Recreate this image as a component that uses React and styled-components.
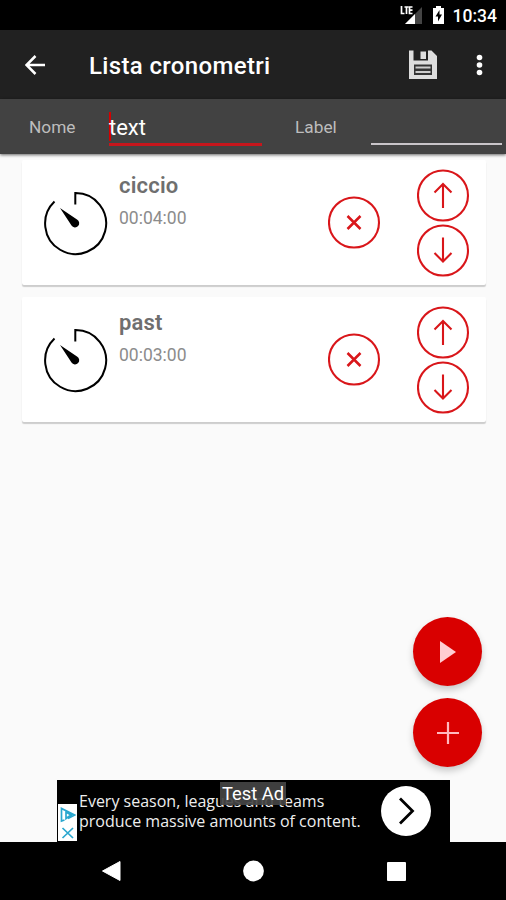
import styled, { createGlobalStyle } from "styled-components";

const GlobalStyle = createGlobalStyle`
  * {
    box-sizing: border-box;
  }

  body {
    margin: 0;
    background: #fafafa;
    font-family: Roboto, "Liberation Sans", sans-serif;
  }

  button {
    padding: 0;
    border: none;
    background: none;
    font: inherit;
  }

  svg {
    display: block;
  }
`;

const Screen = styled.div`
  display: flex;
  flex-direction: column;
  width: 506px;
  height: 900px;
  overflow: hidden;
  background: #fafafa;
`;

const StatusBar = styled.div`
  display: flex;
  flex: none;
  justify-content: flex-end;
  height: 30px;
  padding-right: 9px;
  background: #000;
  color: #fff;
`;

const Clock = styled.span`
  margin-left: 5px;
  font-size: 17.5px;
  font-weight: 500;
  line-height: 32px;
`;

const Toolbar = styled.header`
  display: flex;
  flex: none;
  align-items: center;
  height: 69px;
  padding: 0 20px 0 25px;
  background: #212121;
`;

const Title = styled.h1`
  flex: 1;
  margin: 2px 0 0 43px;
  color: #fff;
  font-size: 24px;
  font-weight: 500;
  letter-spacing: 0.35px;
  line-height: 30px;
`;

const MenuButton = styled.button`
  margin-left: 36px;
`;

const Form = styled.div`
  display: flex;
  flex: none;
  height: 55px;
  padding-left: 29px;
  background: #424242;
  box-shadow: 0 1px 3px rgba(0, 0, 0, 0.6);
  z-index: 1;
`;

const Label = styled.label`
  width: ${(props) => props.$width};
  color: #bdbdbd;
  font-size: 17.3px;
  line-height: 57px;
`;

const Field = styled.div`
  display: flex;
  width: ${(props) => props.$width};
  height: ${(props) => (props.$active ? "47px" : "46px")};
  margin-right: 33px;
  padding-top: 13px;
  border-bottom: ${(props) =>
    props.$active ? "3px solid #c6161c" : "2px solid #c9c5c9"};
  color: #fff;
  font-size: 22px;
  line-height: 32px;

  &:last-child {
    margin-right: 0;
  }
`;

const Caret = styled.span`
  width: 2px;
  height: 29px;
  margin-right: -2px;
  background: #d50000;
`;

const List = styled.main`
  display: flex;
  flex: 1;
  flex-direction: column;
  gap: 12px;
  padding: 6px 20px 0 22px;
`;

const Card = styled.article`
  display: flex;
  height: 125px;
  padding: 9px 16px 0 21px;
  border-radius: 2px;
  background: #fff;
  box-shadow: 0 2px 1px #cdcdcd;
`;

const Details = styled.div`
  flex: 1;
  margin: 4px 0 0 11px;
`;

const Name = styled.h2`
  margin: 0;
  color: #6f6f6f;
  font-size: 22px;
  font-weight: 600;
  letter-spacing: 0.2px;
  line-height: 26px;
`;

const Time = styled.div`
  margin-top: 8px;
  color: #8c8c8c;
  font-size: 17.5px;
  font-weight: 400;
  line-height: 22px;
`;

const TimerSlot = styled.div`
  padding-top: 20px;
`;

const DeleteButton = styled.button`
  align-self: flex-start;
  margin: 27px 36px 0 0;
`;

const Movers = styled.div`
  display: flex;
  flex-direction: column;
  gap: 2px;
`;

const Actions = styled.div`
  display: flex;
  flex: none;
  flex-direction: column;
  align-items: flex-end;
  gap: 12px;
  height: 163px;
  padding-right: 24px;
`;

const Fab = styled.button`
  display: grid;
  place-items: center;
  width: 69px;
  height: 69px;
  border-radius: 50%;
  background: #d90000;
  box-shadow: 0 4px 7px rgba(0, 0, 0, 0.2);
`;

const Ad = styled.aside`
  display: flex;
  position: relative;
  flex: none;
  width: 393px;
  height: 62px;
  margin-left: 57px;
  background: #000;
`;

const AdChoices = styled.div`
  display: grid;
  align-self: flex-end;
  place-items: center;
  width: 19px;
  height: 37px;
  margin: 0 0 1px 1px;
  background: #fff;
`;

const AdText = styled.p`
  width: 302px;
  margin: 12px 0 0 2px;
  color: #eee;
  font-family: "Open Sans", sans-serif;
  font-size: 16px;
  line-height: 19.5px;
  white-space: nowrap;
`;

const AdLine = styled.span`
  display: block;
`;

const AdButton = styled.button`
  display: grid;
  place-items: center;
  width: 50px;
  height: 50px;
  margin-top: 6px;
  border-radius: 50%;
  background: #fff;
`;

const TestBadge = styled.div`
  position: absolute;
  top: 2px;
  left: 163px;
  width: 66px;
  height: 23px;
  background: rgba(68, 68, 68, 0.92);
  color: #fff;
  font-size: 18.3px;
  line-height: 24px;
  text-align: center;
  white-space: nowrap;
`;

const NavBar = styled.nav`
  display: flex;
  flex: none;
  align-items: center;
  justify-content: space-between;
  height: 58px;
  padding: 0 99px 0 101px;
  background: #000;
`;

const timers = [
  { name: "ciccio", time: "00:04:00" },
  { name: "past", time: "00:03:00" },
];

const glyphs = {
  close: "M19.5 20l13 13M32.5 20l-13 13",
  up: "M26 39V15M17.5 23.5l8.5-8.5 8.5 8.5",
  down: "M26 13.5v24M17.5 29l8.5 8.5 8.5-8.5",
};

function RoundIcon({ type }) {
  return (
    <svg width="53" height="53" viewBox="0 0 53 53" fill="none" stroke="#d9161a">
      <circle cx="26" cy="26.5" r="25" strokeWidth="2.1" />
      <path d={glyphs[type]} strokeWidth={type === "close" ? 2.5 : 2.1} />
    </svg>
  );
}

function TimerIcon() {
  return (
    <svg width="65" height="68" viewBox="0 0 65 68">
      <path
        d="M32.3 15.5V4A30.5 30.5 0 1 1 11.5 12.5"
        fill="none"
        stroke="#000"
        strokeWidth="2"
      />
      <path d="M17 19L34 30.5a4.2 4.2 0 1 1-5.500 6z" />
    </svg>
  );
}

function TimerCard({ timer }) {
  return (
    <Card>
      <TimerSlot>
        <TimerIcon />
      </TimerSlot>
      <Details>
        <Name>{timer.name}</Name>
        <Time>{timer.time}</Time>
      </Details>
      <DeleteButton>
        <RoundIcon type="close" />
      </DeleteButton>
      <Movers>
        <button>
          <RoundIcon type="up" />
        </button>
        <button>
          <RoundIcon type="down" />
        </button>
      </Movers>
    </Card>
  );
}

function StatusIcons() {
  return (
    <svg width="48" height="30" viewBox="0 0 48 30">
      <path d="M22 7v17H5z" fill="#444" />
      <path d="M15 14v10H5z" fill="#fff" />
      <path
        d="M1.5 6v7.500h3M4.500 7h4M6.500 7v7M12.500 7h-3v6.500h3M9.500 10.200h3"
        fill="none"
        stroke="#fff"
        strokeWidth="1.7"
      />
      <path d="M36 6h5v2h3v16H33V8h3z" fill="#fff" />
      <path d="M39.5 10l-4 6.500h2.500v5l4-7h-2.500z" fill="#000" />
    </svg>
  );
}

export default function App() {
  return (
    <>
      <GlobalStyle />
      <Screen>
        <StatusBar>
          <StatusIcons />
          <Clock>10:34</Clock>
        </StatusBar>

        <Toolbar>
          <button>
            <svg width="21" height="20" viewBox="0 0 21 20" fill="none">
              <path
                d="M20 10H2M10.5 1L1.5 10l9 9"
                stroke="#fff"
                strokeWidth="2.5"
              />
            </svg>
          </button>
          <Title>Lista cronometri</Title>
          <button>
            <svg width="29" height="30" viewBox="0 0 29 30">
              <path d="M0 .5h4.500v10H19V.5h3.500l5.500 5.500v23H0z" fill="#ddd" />
              <path d="M11.500 1.500H17V9h-5.500z" fill="#ddd" />
              <path d="M5 14.500h18V25H5z" fill="#333" />
              <path d="M6.500 17.500h15M6.500 22h15" stroke="#ccc" strokeWidth="2" />
            </svg>
          </button>
          <MenuButton>
            <svg width="12" height="22" viewBox="0 0 12 22" fill="#fff">
              <circle cx="5.5" cy="3.5" r="2.8" />
              <circle cx="5.5" cy="11" r="2.8" />
              <circle cx="5.5" cy="18.5" r="2.8" />
            </svg>
          </MenuButton>
        </Toolbar>

        <Form>
          <Label $width="80px">Nome</Label>
          <Field $width="153px" $active>
            <Caret />
            text
          </Field>
          <Label $width="76px">Label</Label>
          <Field $width="131px" />
        </Form>

        <List>
          {timers.map((timer) => (
            <TimerCard key={timer.name} timer={timer} />
          ))}
        </List>

        <Actions>
          <Fab>
            <svg width="20" height="24" viewBox="0 0 20 24">
              <path d="M2 1l16 11L2 23z" fill="#ffcdd2" />
            </svg>
          </Fab>
          <Fab>
            <svg width="24" height="24" viewBox="0 0 24 24">
              <path d="M12 1v22M1 12h22" stroke="#ffb9be" strokeWidth="2.2" />
            </svg>
          </Fab>
        </Actions>

        <Ad>
          <AdChoices>
            <svg
              width="16"
              height="34"
              viewBox="0 0 16 34"
              fill="none"
              stroke="#2aa7cf"
              strokeWidth="1.7"
            >
              <path d="M4.5 14L1.500 15V2.500L14.500 9 8 12.500M6 6v6.500l5-3.500z" />
              <path d="M2.500 22l10.500 10M13 22L2.500 32" />
            </svg>
          </AdChoices>
          <AdText>
            <AdLine>Every season, leagues and teams</AdLine>
            <AdLine>produce massive amounts of content.</AdLine>
          </AdText>
          <AdButton>
            <svg width="18" height="28" viewBox="0 0 18 28" fill="none">
              <path d="M3 1.5L15.5 14 3 26.5" stroke="#000" strokeWidth="2.8" />
            </svg>
          </AdButton>
          <TestBadge>Test Ad</TestBadge>
        </Ad>

        <NavBar>
          <svg width="20" height="22" viewBox="0 0 20 22" fill="#fff">
            <path d="M19 1.5v19L1.5 11z" stroke="#fff" strokeLinejoin="round" />
          </svg>
          <svg width="22" height="22" viewBox="0 0 22 22" fill="#fff">
            <circle cx="10.5" cy="11" r="10.4" />
          </svg>
          <svg width="21" height="21" viewBox="0 0 21 21" fill="#fff">
            <rect x="1" y="1" width="19" height="19" rx="1" />
          </svg>
        </NavBar>
      </Screen>
    </>
  );
}
